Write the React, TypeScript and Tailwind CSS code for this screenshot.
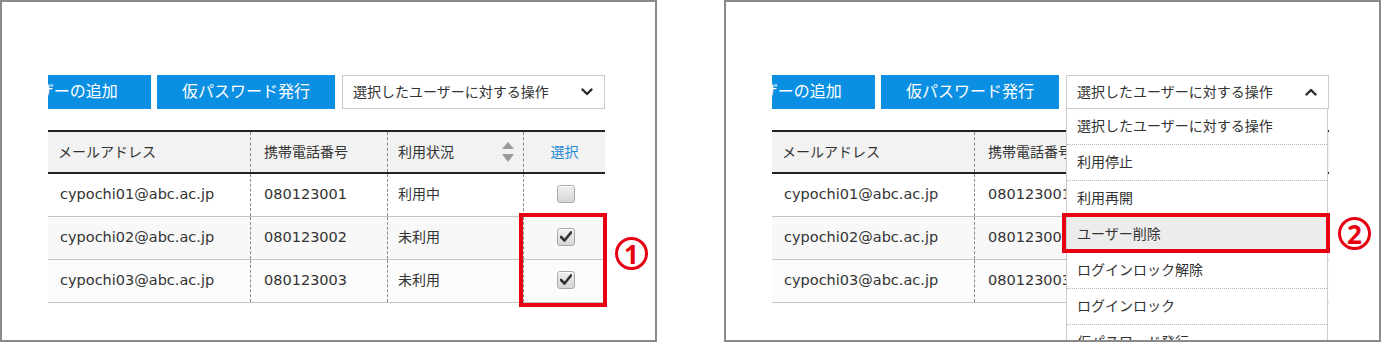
import React from "react";

const cols = "grid grid-cols-[202px_137px_136px_82px]";

const rows = [
  { email: "cypochi01@abc.ac.jp", phone: "080123001", status: "利用中", checked: false, bg: "bg-white" },
  { email: "cypochi02@abc.ac.jp", phone: "080123002", status: "未利用", checked: true, bg: "bg-[#f8f8f8]" },
  { email: "cypochi03@abc.ac.jp", phone: "080123003", status: "未利用", checked: true, bg: "bg-[#fcfcfc]" },
];

const menuItems = [
  "選択したユーザーに対する操作",
  "利用停止",
  "利用再開",
  "ユーザー削除",
  "ログインロック解除",
  "ログインロック",
  "仮パスワード発行",
];

function SortIcon() {
  return (
    <svg width="12" height="21" viewBox="0 0 12 21">
      <polygon points="6,0 12,7 0,7" fill="#9a9a9a" />
      <polygon points="0,12 12,12 6,20" fill="#9a9a9a" />
    </svg>
  );
}

function Chevron({ up }: { up?: boolean }) {
  return (
    <svg width="12" height="8" viewBox="0 0 12 8">
      <polyline
        points={up ? "1.5,6.5 6,2 10.5,6.5" : "1.5,1.5 6,6 10.5,1.5"}
        fill="none"
        stroke="#2a2a2a"
        strokeWidth="2.4"
        strokeLinecap="round"
        strokeLinejoin="round"
      />
    </svg>
  );
}

function Checkbox({ checked }: { checked: boolean }) {
  return (
    <div className="w-[18px] h-[18px] rounded-[3px] border border-[#a9a9a9] bg-gradient-to-b from-[#f0f0f0] to-[#d6d6d6] flex items-center justify-center shadow-[inset_0_1px_0_#fff]">
      {checked && (
        <svg width="12" height="11" viewBox="0 0 12 11">
          <path d="M1 6 L4.5 9.5 L11 1.5" fill="none" stroke="#333" strokeWidth="2.6" strokeLinejoin="round" strokeLinecap="round" />
        </svg>
      )}
    </div>
  );
}

function CircleNum({ n }: { n: string }) {
  return (
    <div className="w-[33px] h-[33px] rounded-full border-[3px] border-[#e60012] flex items-center justify-center text-[#e60012] text-[26px] font-bold leading-none font-['Noto_Sans',sans-serif]">
      {n}
    </div>
  );
}

function Panel({ open }: { open?: boolean }) {
  return (
    <div className="relative w-[657px] h-[342px] shrink-0 border-2 border-[#8a8a8a] bg-white overflow-hidden">
      <div className="ml-[46px] mt-[73px] w-[557px]">
        <div className="flex h-[34px]">
          <div className="w-[287px] overflow-hidden flex justify-end gap-[6px]">
            <div className="w-[178px] shrink-0 bg-[#0b8fe2] text-white text-[16px] flex items-center justify-center">
              ユーザーの追加
            </div>
            <div className="w-[178px] shrink-0 bg-[#0b8fe2] text-white text-[16px] flex items-center justify-center">
              仮パスワード発行
            </div>
          </div>
          <div className="ml-[7px] w-[263px] border border-[#cccccc] bg-white flex items-center justify-between pl-[10px] pr-[11px] text-[14px] text-[#333]">
            <span>選択したユーザーに対する操作</span>
            <Chevron up={open} />
          </div>
        </div>

        <div className="mt-[21px]">
          <div className={`${cols} h-[44px] border-y-2 border-[#222] bg-[#f2f2f2] text-[14px] text-[#333]`}>
            <div className="flex items-center pl-[10px]">メールアドレス</div>
            <div className="flex items-center pl-[13px] border-l border-dashed border-[#8a8a8a]">携帯電話番号</div>
            <div className="flex items-center justify-between pl-[10px] pr-[9px] border-l border-dashed border-[#8a8a8a]">
              <span>利用状況</span>
              <SortIcon />
            </div>
            <div className="flex items-center justify-center border-l border-dashed border-[#8a8a8a] text-[#1e88d8]">選択</div>
          </div>
          {rows.map((r) => (
            <div key={r.email} className={`${cols} h-[43px] border-b border-[#c4c4c4] ${r.bg} text-[#333]`}>
              <div className="flex items-center pl-[12px] text-[14.5px]">{r.email}</div>
              <div className="flex items-center pl-[13px] text-[14.5px] border-l border-dashed border-[#8a8a8a]">{r.phone}</div>
              <div className="flex items-center pl-[10px] pb-[2px] text-[14px] border-l border-dashed border-[#8a8a8a]">{r.status}</div>
              <div className="flex items-center justify-center pb-[3px] pl-[2px] border-l border-dashed border-[#8a8a8a]">
                <Checkbox checked={r.checked} />
              </div>
            </div>
          ))}
        </div>
      </div>

      {open && (
        <div className="absolute left-[340px] top-[107px] w-[262px] bg-white border-x border-[#cccccc] text-[14px] text-[#333]">
          {menuItems.map((m, i) => (
            <div
              key={m}
              className={`h-[36px] flex items-center pl-[10px] border-b border-dotted border-[#b8b8b8] ${i === 3 ? "bg-[#ececec]" : "bg-white"}`}
            >
              {m}
            </div>
          ))}
        </div>
      )}

      {open ? (
        <>
          <div className="absolute left-[336px] top-[211px] w-[268px] h-[40px] border-4 border-[#e60012]" />
          <div className="absolute left-[612px] top-[215px]">
            <CircleNum n="2" />
          </div>
        </>
      ) : (
        <>
          <div className="absolute left-[517px] top-[211px] w-[88px] h-[94px] border-4 border-[#e60012]" />
          <div className="absolute left-[613px] top-[235px]">
            <CircleNum n="1" />
          </div>
        </>
      )}
    </div>
  );
}

export default function App() {
  return (
    <div className="w-[1382px] h-[342px] bg-white flex gap-[67px] font-['DejaVu_Sans','Noto_Sans_CJK_JP',sans-serif]">
      <Panel />
      <Panel open />
    </div>
  );
}
